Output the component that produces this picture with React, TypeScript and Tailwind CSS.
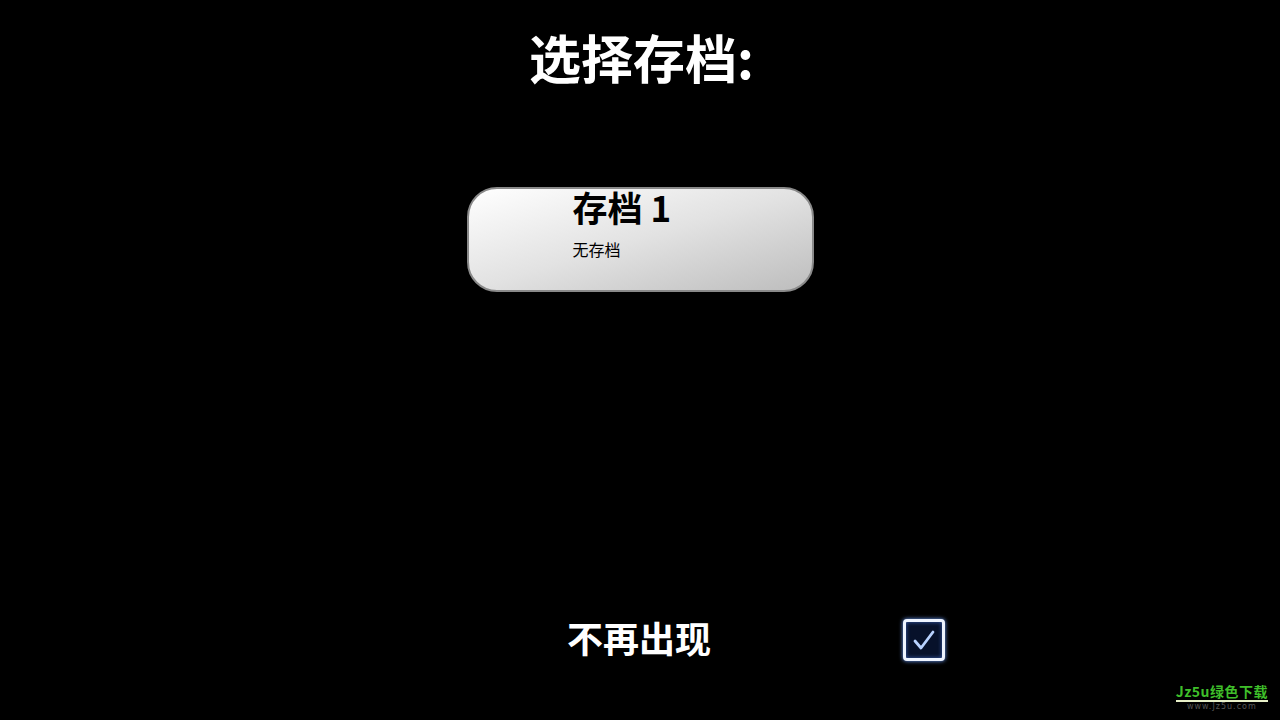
import React from "react";

const cjk = { fontFamily: '"Noto Sans CJK SC", "Noto Sans", sans-serif' };

export default function App() {
  return (
    <div className="relative w-[1280px] h-[720px] bg-black overflow-hidden flex flex-col items-center" style={cjk}>
      <h1 className="mt-[21px] text-white text-[52px] leading-[72px] font-bold ml-[3px]">选择存档:</h1>
      <div className="mt-[94px] w-[347px] h-[105px] rounded-[30px] border-2 border-[#8a8a8a] bg-gradient-to-br from-[#ffffff] via-[#e2e2e2] to-[#bdbdbd] flex flex-col pl-[104px]">
        <div className="text-black text-[35px] leading-[38px] font-bold -mt-[1px]">存档 1</div>
        <div className="text-black text-[16px] leading-[20px] mt-[13px]">无存档</div>
      </div>
      <div className="mt-[323px] w-[378px] flex items-start justify-between ml-[232px]">
        <span className="text-white text-[36px] leading-[44px] font-bold">不再出现</span>
        <div className="mt-[4px] w-[42px] h-[42px] rounded-[4px] border-[3px] border-[#eef4ff] bg-[#07112a] flex items-center justify-center shadow-[0_0_4px_#6fa0ff,inset_0_0_4px_#3b5fae]">
          <svg width="28" height="26" viewBox="0 0 28 26">
            <path d="M5 14 L11 21 L23 5" fill="none" stroke="#b8d2ff" strokeWidth="2.8" strokeLinecap="round" strokeLinejoin="round" />
          </svg>
        </div>
      </div>
      <div className="absolute right-[12px] bottom-[8px] flex flex-col items-center">
        <div className="text-[#3fbf2a] text-[14px] leading-[16px] font-bold tracking-[0.5px]">Jz5u绿色下载</div>
        <div className="w-[92px] h-[2px] bg-[#e8f0c8] mt-[1px]" />
        <div className="text-[#555] text-[8px] leading-[10px] tracking-[1px]" style={{ fontFamily: '"DejaVu Sans", sans-serif' }}>www.Jz5u.com</div>
      </div>
    </div>
  );
}
